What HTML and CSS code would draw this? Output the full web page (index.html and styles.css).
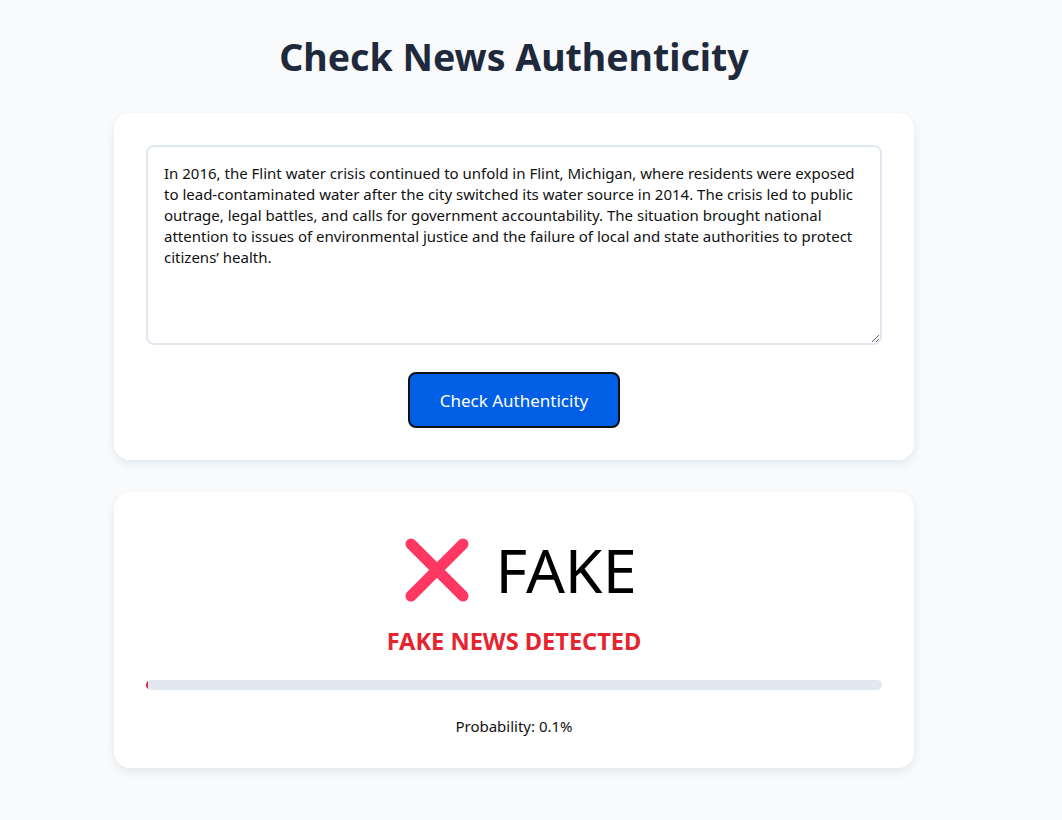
FILE: index.html
```html
<!DOCTYPE html>
<html lang="en">
<head>
<meta charset="utf-8">
<title>Check News Authenticity</title>
<link rel="stylesheet" href="styles.css">
</head>
<body>
<main class="container">
  <h1 class="title">Check News Authenticity</h1>
  <section class="card input-card">
    <textarea class="news-input" spellcheck="false">In 2016, the Flint water crisis continued to unfold in Flint, Michigan, where residents were exposed to lead-contaminated water after the city switched its water source in 2014. The crisis led to public outrage, legal battles, and calls for government accountability. The situation brought national attention to issues of environmental justice and the failure of local and state authorities to protect citizens’ health.</textarea>
    <button class="check-btn" type="button">Check Authenticity</button>
  </section>
  <section class="card result-card">
    <div class="verdict">
      <svg class="verdict-icon" viewBox="0 0 64 64" width="64" height="64" aria-hidden="true">
        <path d="M6 6 L58 58 M58 6 L6 58" stroke="#fe3763" stroke-width="11" stroke-linecap="round" fill="none"/>
      </svg>
      <span class="verdict-text">FAKE</span>
    </div>
    <h2 class="verdict-label">FAKE NEWS DETECTED</h2>
    <div class="progress"><div class="progress-fill" style="width:0.1%"></div></div>
    <p class="probability">Probability: 0.1%</p>
  </section>
</main>
</body>
</html>
```
FILE: styles.css
```css
* { box-sizing: border-box; }
html, body {
  margin: 0;
  padding: 0;
  background: #f8fafc;
  font-family: "Noto Sans", "Open Sans", sans-serif;
  color: #111;
}
body { padding-right: 34px; }
.container {
  width: 800px;
  margin: 0 auto;
  padding: 28px 0 40px;
  display: flex;
  flex-direction: column;
  gap: 32px;
}
.title {
  margin: 0 0 -4px;
  text-align: center;
  font-size: 37.5px;
  line-height: 57px;
  font-weight: 700;
  color: #1e293b;
}
.card {
  background: #fff;
  border-radius: 16px;
  box-shadow: 0 4px 10px rgba(15, 23, 42, 0.08);
  padding: 32px;
  display: flex;
  flex-direction: column;
  align-items: center;
}
.news-input {
  width: 100%;
  height: 200px;
  border: 2px solid #e2e8f0;
  border-radius: 8px;
  padding: 16px 16px;
  font-family: "Noto Sans", sans-serif;
  font-size: 15px;
  line-height: 21px;
  color: #111;
  resize: vertical;
  outline: none;
}
.check-btn {
  margin-top: 27px;
  width: 212px;
  height: 56px;
  background: #005fe5;
  color: #fff;
  border: 2px solid #111;
  border-radius: 8px;
  font-family: "Noto Sans", sans-serif;
  font-size: 17px;
}
.result-card { padding-top: 43px; padding-bottom: 31px; }
.verdict {
  display: flex;
  align-items: center;
  gap: 26px;
  margin-left: 14px;
}
.verdict-icon { display: block; }
.verdict-text {
  font-size: 61px;
  line-height: 70px;
  font-weight: 400;
  color: #000;
}
.verdict-label {
  margin: 20px 0 0;
  font-size: 23.6px;
  line-height: 32px;
  font-weight: 700;
  color: #e5242f;
}
.progress {
  margin-top: 23px;
  width: 100%;
  height: 10px;
  background: #e2e8f0;
  border-radius: 5px;
  overflow: hidden;
}
.progress-fill {
  height: 100%;
  background: #e5242f;
  min-width: 2px;
}
.probability {
  margin: 25px 0 0;
  font-size: 15px;
  line-height: 22px;
  color: #111;
}
```
